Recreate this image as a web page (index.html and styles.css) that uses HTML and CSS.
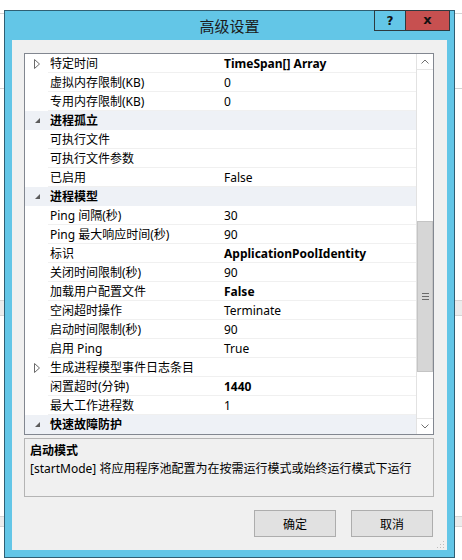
FILE: index.html
```html
<!DOCTYPE html>
<html lang="zh-CN">
<head>
  <meta charset="UTF-8" />
  <title>高级设置</title>
  <link rel="stylesheet" href="styles.css">
</head>
<body>

  <!-- Ventana de fondo (tapada casi del todo por el diálogo) -->
  <div class="fondo">
    <div class="fondo-linea linea-1"></div>
    <div class="fondo-linea linea-2"></div>
    <div class="fondo-banda banda-1"></div>
    <div class="fondo-banda banda-2"></div>
  </div>

  <div class="ventana">
    <div class="barra-titulo">
      高级设置
      <div class="botones-titulo">
        <div class="btn-ayuda">?</div>
        <div class="btn-cerrar">x</div>
      </div>
    </div>

    <div class="cliente">
      <div class="cuadricula">
        <div class="filas">
          <div class="fila">
            <div class="margen"><svg width="7" height="10" viewBox="0 0 7 10"><polygon points="0.5,0.5 5.5,5 0.5,9.5" fill="#fff" stroke="#6a6a6a"/></svg></div>
            <div class="nombre">特定时间</div>
            <div class="valor negrita">TimeSpan[] Array</div>
          </div>
          <div class="fila"><div class="margen"></div><div class="nombre">虚拟内存限制(KB)</div><div class="valor">0</div></div>
          <div class="fila"><div class="margen"></div><div class="nombre">专用内存限制(KB)</div><div class="valor">0</div></div>
          <div class="fila categoria">
            <div class="margen"><svg width="6" height="6" viewBox="0 0 6 6"><polygon points="5,0 5,5 0,5" fill="#5c5c5c"/></svg></div>
            <div class="nombre">进程孤立</div>
            <div class="valor"></div>
          </div>
          <div class="fila"><div class="margen"></div><div class="nombre">可执行文件</div><div class="valor"></div></div>
          <div class="fila"><div class="margen"></div><div class="nombre">可执行文件参数</div><div class="valor"></div></div>
          <div class="fila"><div class="margen"></div><div class="nombre">已启用</div><div class="valor">False</div></div>
          <div class="fila categoria">
            <div class="margen"><svg width="6" height="6" viewBox="0 0 6 6"><polygon points="5,0 5,5 0,5" fill="#5c5c5c"/></svg></div>
            <div class="nombre">进程模型</div>
            <div class="valor"></div>
          </div>
          <div class="fila"><div class="margen"></div><div class="nombre">Ping 间隔(秒)</div><div class="valor">30</div></div>
          <div class="fila"><div class="margen"></div><div class="nombre">Ping 最大响应时间(秒)</div><div class="valor">90</div></div>
          <div class="fila"><div class="margen"></div><div class="nombre">标识</div><div class="valor negrita">ApplicationPoolIdentity</div></div>
          <div class="fila"><div class="margen"></div><div class="nombre">关闭时间限制(秒)</div><div class="valor">90</div></div>
          <div class="fila"><div class="margen"></div><div class="nombre">加载用户配置文件</div><div class="valor negrita">False</div></div>
          <div class="fila"><div class="margen"></div><div class="nombre">空闲超时操作</div><div class="valor">Terminate</div></div>
          <div class="fila"><div class="margen"></div><div class="nombre">启动时间限制(秒)</div><div class="valor">90</div></div>
          <div class="fila"><div class="margen"></div><div class="nombre">启用 Ping</div><div class="valor">True</div></div>
          <div class="fila">
            <div class="margen"><svg width="7" height="10" viewBox="0 0 7 10"><polygon points="0.5,0.5 5.5,5 0.5,9.5" fill="#fff" stroke="#6a6a6a"/></svg></div>
            <div class="nombre">生成进程模型事件日志条目</div>
            <div class="valor"></div>
          </div>
          <div class="fila"><div class="margen"></div><div class="nombre">闲置超时(分钟)</div><div class="valor negrita">1440</div></div>
          <div class="fila"><div class="margen"></div><div class="nombre">最大工作进程数</div><div class="valor">1</div></div>
          <div class="fila categoria">
            <div class="margen"><svg width="6" height="6" viewBox="0 0 6 6"><polygon points="5,0 5,5 0,5" fill="#5c5c5c"/></svg></div>
            <div class="nombre">快速故障防护</div>
            <div class="valor"></div>
          </div>
        </div>

        <!-- Barra de desplazamiento -->
        <div class="scroll">
          <div class="scroll-btn arriba"><svg width="8" height="5" viewBox="0 0 8 5"><polyline points="0.5,4.5 4,1 7.5,4.5" fill="none" stroke="#707070"/></svg></div>
          <div class="scroll-hueco-1"></div>
          <div class="scroll-pulgar">
            <svg width="7" height="7" viewBox="0 0 7 7"><path d="M0 0.5H7M0 3.5H7M0 6.5H7" stroke="#6a6a6a"/></svg>
          </div>
          <div class="scroll-hueco-2"></div>
          <div class="scroll-btn abajo"><svg width="8" height="5" viewBox="0 0 8 5"><polyline points="0.5,0.5 4,4 7.5,0.5" fill="none" stroke="#707070"/></svg></div>
        </div>
      </div>

      <div class="descripcion">
        <div class="desc-titulo">启动模式</div>
        <div class="desc-texto">[startMode] 将应用程序池配置为在按需运行模式或始终运行模式下运行</div>
      </div>

      <div class="acciones">
        <button class="btn">确定</button>
        <button class="btn">取消</button>
      </div>

      <svg class="agarre" width="8" height="8" viewBox="0 0 8 8">
        <rect x="6" y="0" width="1" height="1" fill="#bdbdbd"/>
        <rect x="3" y="3" width="1" height="1" fill="#bdbdbd"/>
        <rect x="6" y="3" width="1" height="1" fill="#bdbdbd"/>
        <rect x="0" y="6" width="1" height="1" fill="#bdbdbd"/>
        <rect x="3" y="6" width="1" height="1" fill="#bdbdbd"/>
        <rect x="6" y="6" width="1" height="1" fill="#bdbdbd"/>
      </svg>
    </div>
  </div>

</body>
</html>
```

FILE: styles.css
```css
body {
  margin: 0;
  width: 462px;
  height: 560px;
  overflow: hidden;
  position: relative;
  background: #fff;
  font-family: "Noto Sans", "Noto Sans CJK SC", sans-serif;
  font-size: 12px;
  color: #000;
}

/* Fondo */
.fondo {
  position: absolute;
  top: 0;
  left: 0;
  width: 462px;
  height: 560px;
  z-index: 0;
}

.fondo-linea {
  position: absolute;
  left: 0;
  width: 462px;
  height: 1px;
  background: #d4d4d4;
}

.linea-1 { top: 13px; }
.linea-2 { top: 88px; }

.fondo-banda {
  position: absolute;
  left: 0;
  width: 462px;
  background: #ececec;
  border-top: 1px solid #d6d6d6;
  border-bottom: 1px solid #d6d6d6;
}

.banda-1 { top: 300px; height: 14px; }
.banda-2 { top: 516px; height: 9px; }

/* Ventana */
.ventana {
  position: relative;
  z-index: 1;
  margin: 10px 0 0 4px;
  width: 451px;
  height: 548px;
  box-sizing: border-box;
  border: 1px solid #2f5f74;
  background: #63c6e7;
  display: flex;
  flex-direction: column;
}

.barra-titulo {
  height: 29px;
  flex-shrink: 0;
  position: relative;
  display: flex;
  align-items: center;
  justify-content: center;
  font-family: "Noto Sans CJK SC", sans-serif;
  font-size: 15px;
  color: #1b1b1b;
}

.botones-titulo {
  position: absolute;
  top: -1px;
  right: 4px;
  display: flex;
  height: 21px;
}

.btn-ayuda,
.btn-cerrar {
  box-sizing: border-box;
  height: 21px;
  border: 1px solid #2d3a40;
  display: flex;
  align-items: center;
  justify-content: center;
  font-family: "DejaVu Sans", sans-serif;
  font-weight: bold;
  font-size: 12px;
  color: #111;
}

.btn-ayuda {
  width: 31px;
  background: #63c6e7;
  border-right: none;
}

.btn-cerrar {
  width: 45px;
  background: #c75050;
  font-size: 13px;
  padding-bottom: 2px;
}

.cliente {
  position: relative;
  flex: 1;
  margin: 0 7px 7px 7px;
  background: #f0f0f0;
  padding: 13px 13px 0 12px;
  display: flex;
  flex-direction: column;
}

/* Cuadrícula de propiedades */
.cuadricula {
  height: 382px;
  box-sizing: border-box;
  border: 1px solid #828790;
  background: #fff;
  display: flex;
}

.filas {
  flex: 1;
  display: flex;
  flex-direction: column;
}

.fila {
  display: flex;
  height: 19px;
}

.margen {
  width: 23px;
  flex-shrink: 0;
  box-sizing: border-box;
  padding-left: 9px;
  display: flex;
  align-items: center;
}

.nombre,
.valor {
  box-sizing: border-box;
  height: 19px;
  padding-top: 1px;
  line-height: 18px;
  border-bottom: 1px solid #f0f0f0;
  white-space: nowrap;
}

.nombre {
  width: 173px;
  flex-shrink: 0;
  padding-left: 2px;
}

.valor {
  flex: 1;
  padding-left: 3px;
}

.negrita {
  font-weight: bold;
}

.categoria {
  background: #eef1f6;
}

.categoria .nombre {
  font-weight: bold;
  border-bottom-color: #eef1f6;
}

.categoria .valor {
  border-bottom-color: #eef1f6;
}

.categoria .margen {
  padding-left: 10px;
}

/* Scroll */
.scroll {
  width: 16px;
  flex-shrink: 0;
  border-left: 1px solid #e2e2e2;
  display: flex;
  flex-direction: column;
  background: #fff;
}

.scroll-btn {
  height: 16px;
  box-sizing: border-box;
  display: flex;
  align-items: center;
  justify-content: center;
}

.arriba { border-bottom: 1px solid #e6e6e6; }
.abajo { border-top: 1px solid #e6e6e6; }

.scroll-hueco-1 { height: 151px; }
.scroll-hueco-2 { flex: 1; }

.scroll-pulgar {
  height: 151px;
  box-sizing: border-box;
  background: #d6d6d6;
  border: 1px solid #c4c4c4;
  display: flex;
  align-items: center;
  justify-content: center;
}

/* Descripción */
.descripcion {
  margin-top: 3px;
  height: 59px;
  box-sizing: border-box;
  border: 1px solid #b4b4b4;
  padding: 3px 5px;
  line-height: 18px;
}

.desc-titulo {
  font-weight: bold;
}

.desc-texto {
  white-space: nowrap;
}

/* Botones */
.acciones {
  margin-top: 13px;
  display: flex;
  justify-content: flex-end;
  gap: 15px;
  padding-right: 1px;
}

.btn {
  width: 82px;
  height: 27px;
  border: 1px solid #adadad;
  background: #e1e1e1;
  font-family: "Noto Sans CJK SC", sans-serif;
  font-size: 12px;
  color: #000;
  padding: 0;
}

.agarre {
  position: absolute;
  right: 2px;
  bottom: 1px;
}
```
